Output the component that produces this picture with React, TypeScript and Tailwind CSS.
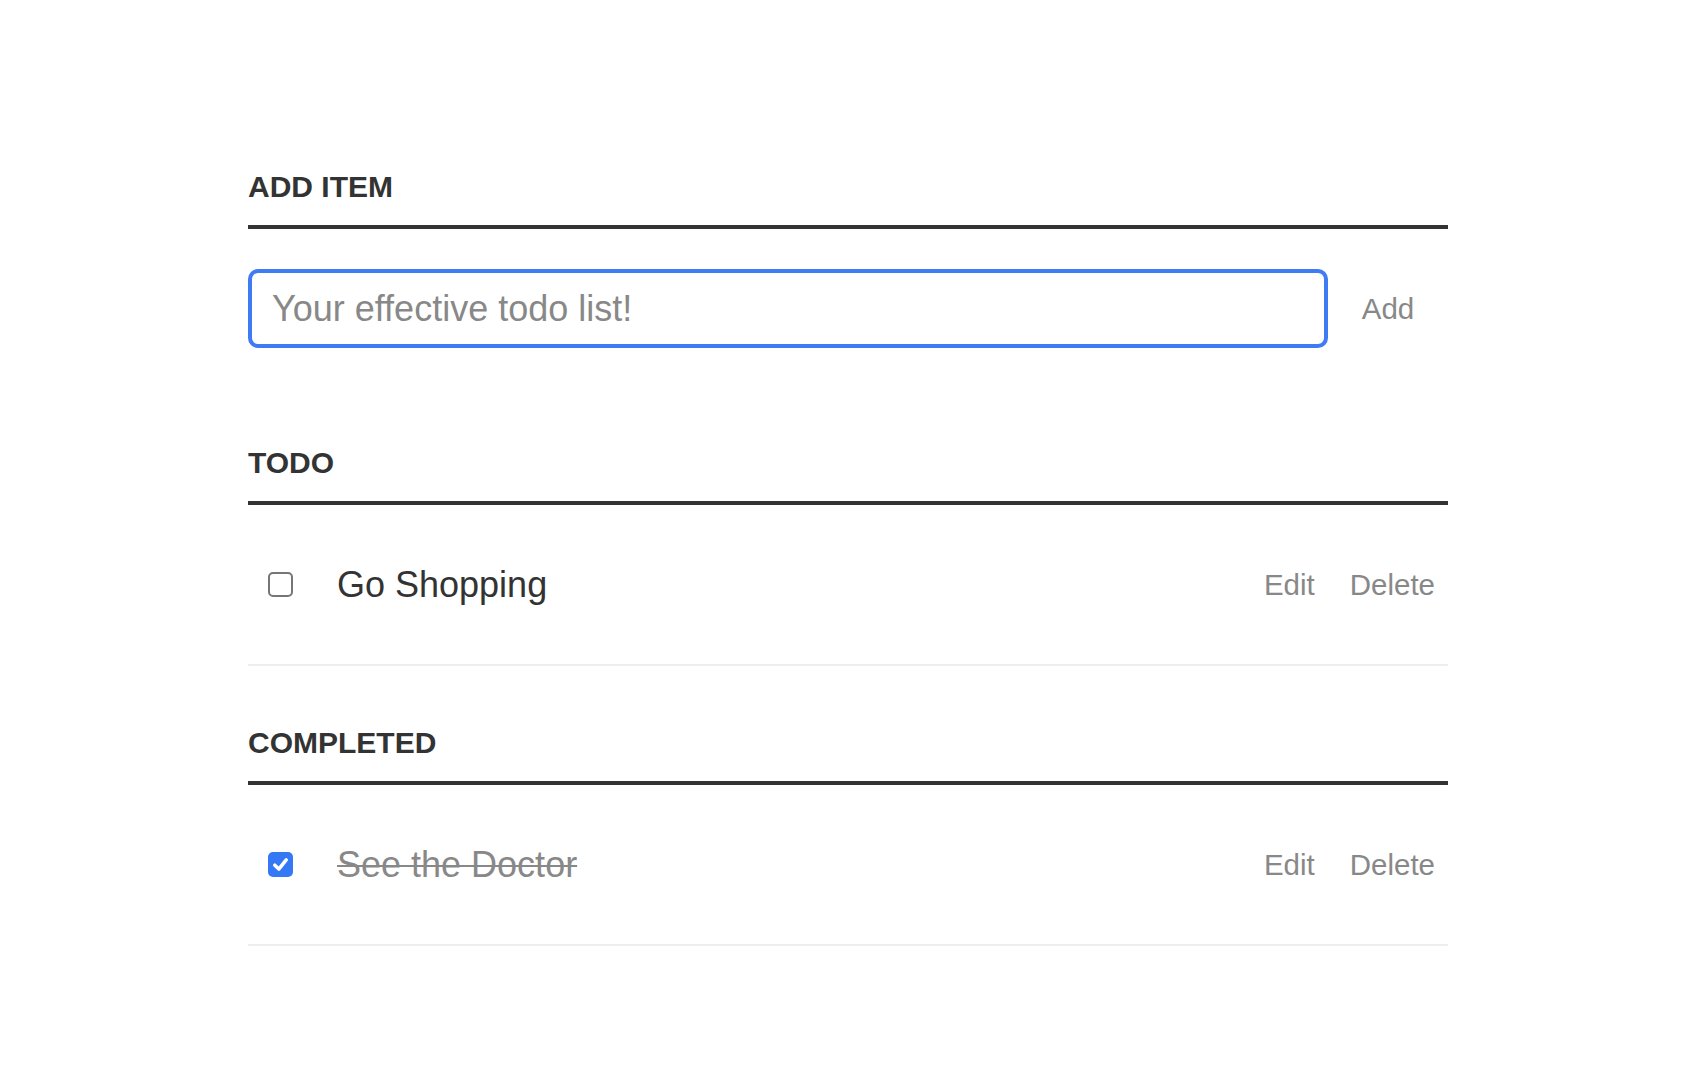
import React from "react";

const font = { fontFamily: '"Liberation Sans", Arial, Helvetica, sans-serif' };

function Heading({ children }: { children: React.ReactNode }) {
  return (
    <h3 className="pt-[62px] pb-[24px] leading-[29px] text-[30px] font-bold uppercase text-[#333] border-b-4 border-[#333]">
      {children}
    </h3>
  );
}

function Check({ checked }: { checked: boolean }) {
  if (checked) {
    return (
      <div className="w-[25px] h-[25px] rounded-[5px] bg-[#3478f6] flex items-center justify-center shrink-0">
        <svg width="19" height="19" viewBox="0 0 16 16">
          <path d="M3.2 8.6 L6.6 11.8 L12.8 4.2" fill="none" stroke="#fff" strokeWidth="3" strokeLinecap="round" strokeLinejoin="round" />
        </svg>
      </div>
    );
  }
  return <div className="w-[25px] h-[25px] rounded-[5px] border-2 border-[#767676] bg-white shrink-0" />;
}

function Row({ text, done }: { text: string; done: boolean }) {
  return (
    <li className="h-[161px] flex items-center border-b-2 border-[#eee] pl-[20px] pr-[13px]">
      <Check checked={done} />
      <span
        className={
          "ml-[44px] flex-1 text-[36px] leading-[40px] " +
          (done ? "text-[#888] line-through decoration-2" : "text-[#333]")
        }
      >
        {text}
      </span>
      <div className="flex gap-[35px] text-[29.5px] leading-[33px] text-[#888]">
        <button className="cursor-pointer">Edit</button>
        <button className="cursor-pointer">Delete</button>
      </div>
    </li>
  );
}

export default function App() {
  return (
    <div className="min-h-[1068px] bg-white" style={font}>
      <div className="w-[1200px] mx-auto pt-[110px]">
        <Heading>Add item</Heading>
        <div className="flex items-center mt-[40px] mb-[38px]">
          <div className="w-[1080px] h-[79px] border-4 border-[#3f7bf5] rounded-[10px] flex items-center px-[20px]">
            <input
              className="w-full outline-none text-[36px] leading-[40px] text-[#333] placeholder:text-[#888] bg-transparent"
              placeholder="Your effective todo list!"
            />
          </div>
          <button className="w-[120px] text-center text-[29.5px] leading-[33px] text-[#888]">Add</button>
        </div>
        <Heading>Todo</Heading>
        <ul>
          <Row text="Go Shopping" done={false} />
        </ul>
        <Heading>Completed</Heading>
        <ul>
          <Row text="See the Doctor" done={true} />
        </ul>
      </div>
    </div>
  );
}
